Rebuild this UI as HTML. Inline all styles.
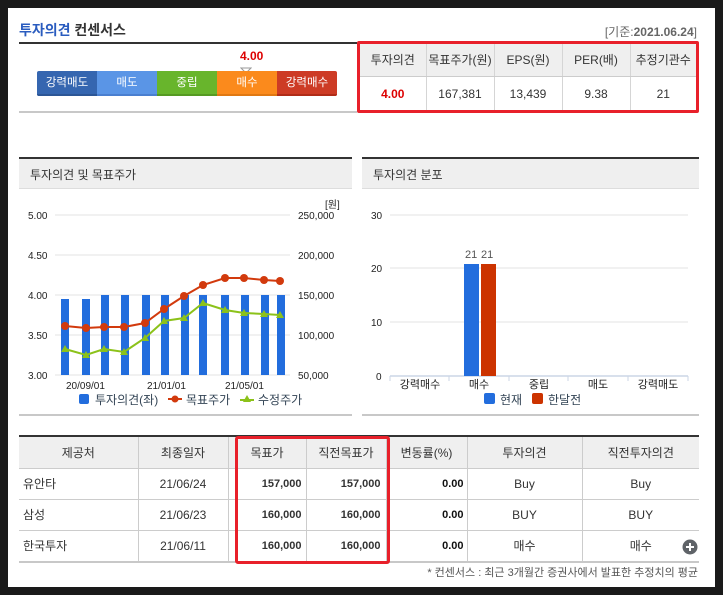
<!DOCTYPE html>
<html><head><meta charset="utf-8"><style>
*{margin:0;padding:0;box-sizing:border-box}
body{width:723px;height:595px;background:#1a1a1a;position:relative;overflow:hidden;font-family:"Liberation Sans","Noto Sans CJK KR",sans-serif;font-size:12px;color:#333}
.abs{position:absolute}
#pg{position:absolute;left:8px;top:8px;width:707px;height:579px;background:#fff}
table{border-collapse:collapse;position:absolute}
td,th{font-weight:normal;text-align:center;font-size:12px;color:#333}
</style></head><body>
<div id="pg"></div>
<div class="abs" style="left:19px;top:20px;font-size:14px;font-weight:bold;color:#333"><span style="color:#2a5cbf">투자의견</span> 컨센서스</div>
<div class="abs" style="left:19px;top:42px;width:338px;height:2px;background:#333"></div>
<div class="abs" style="left:19px;top:111px;width:338px;height:2px;background:#c8c8c8"></div>
<div class="abs" style="left:240px;top:49px;font-size:12px;font-weight:bold;color:#d00">4.00</div>
<svg class="abs" style="left:240px;top:67px" width="12" height="8"><polygon points="1,1 11,1 6,6" fill="#fff" stroke="#999"/></svg>
<div class="abs" style="left:37px;top:71px;width:300px;height:25px;display:flex;color:#fff;font-size:11.5px;line-height:24px;text-align:center;border-radius:2px;overflow:hidden">
<div style="width:60px;background:#3566b0;border-bottom:2px solid #2c5696">강력매도</div>
<div style="width:60px;background:#5a95e6;border-bottom:2px solid #4a7fd0">매도</div>
<div style="width:60px;background:#68b52c;border-bottom:2px solid #559a22">중립</div>
<div style="width:60px;background:#fb8a1c;border-bottom:2px solid #e07812">매수</div>
<div style="width:60px;background:#cd3b25;border-bottom:2px solid #b02c18">강력매수</div>
</div>
<div class="abs" style="right:26px;top:23px;font-size:12px;color:#666">[기준:<b>2021.06.24</b>]</div>
<table style="left:360px;top:44px;width:336px">
<tr style="height:32px;background:#efefef"><td style="width:66px;border-right:1px solid #d5d5d5;border-bottom:1px solid #ccc">투자의견</td><td style="width:68px;border-right:1px solid #d5d5d5;border-bottom:1px solid #ccc">목표주가(원)</td><td style="width:68px;border-right:1px solid #d5d5d5;border-bottom:1px solid #ccc">EPS(원)</td><td style="width:68px;border-right:1px solid #d5d5d5;border-bottom:1px solid #ccc">PER(배)</td><td style="border-bottom:1px solid #ccc">추정기관수</td></tr>
<tr style="height:35px"><td style="border-right:1px solid #d5d5d5;color:#d00;font-weight:bold">4.00</td><td style="border-right:1px solid #d5d5d5">167,381</td><td style="border-right:1px solid #d5d5d5">13,439</td><td style="border-right:1px solid #d5d5d5">9.38</td><td>21</td></tr>
</table>
<div class="abs" style="left:357px;top:41px;width:342px;height:72px;border:3px solid #e8202a;border-radius:2px"></div>

<!-- chart 1 -->
<div class="abs" style="left:19px;top:157px;width:333px;height:2px;background:#333"></div>
<div class="abs" style="left:19px;top:159px;width:333px;height:30px;background:#efefef;border-bottom:1px solid #ddd;padding:7px 0 0 11px;font-size:12px">투자의견 및 목표주가</div>
<div class="abs" style="left:19px;top:414px;width:333px;height:2px;background:#c8c8c8"></div>
<svg class="abs" style="left:0;top:0" width="360" height="420" font-family="Liberation Sans,sans-serif" font-size="10" fill="#222">
<g stroke="#e3e3e3"><line x1="55" y1="215" x2="290" y2="215"/><line x1="55" y1="255" x2="290" y2="255"/><line x1="55" y1="295" x2="290" y2="295"/><line x1="55" y1="335" x2="290" y2="335"/><line x1="55" y1="375" x2="290" y2="375"/></g>
<text x="28" y="219">5.00</text><text x="28" y="259">4.50</text><text x="28" y="299">4.00</text><text x="28" y="339">3.50</text><text x="28" y="379">3.00</text>
<text x="298" y="219">250,000</text><text x="298" y="259">200,000</text><text x="298" y="299">150,000</text><text x="298" y="339">100,000</text><text x="298" y="379">50,000</text>
<text x="325" y="208" font-family="Liberation Sans,Noto Sans CJK KR,sans-serif">[원]</text>
<g fill="#226ddd">
<rect x="61" y="299" width="8" height="76"/><rect x="82" y="299" width="8" height="76"/><rect x="101" y="295" width="8" height="80"/><rect x="121" y="295" width="8" height="80"/><rect x="142" y="295" width="8" height="80"/><rect x="161" y="295" width="8" height="80"/><rect x="181" y="295" width="8" height="80"/><rect x="199" y="295" width="8" height="80"/><rect x="221" y="295" width="8" height="80"/><rect x="241" y="295" width="8" height="80"/><rect x="261" y="295" width="8" height="80"/><rect x="277" y="295" width="8" height="80"/></g>
<polyline fill="none" stroke="#d23a0d" stroke-width="2" points="65,326 86,328 104,327 124,327 145,323 164,309 184,296 203,285 225,278 244,278 264,280 280,281"/>
<g fill="#d23a0d"><circle cx="65" cy="326" r="4"/><circle cx="86" cy="328" r="4"/><circle cx="104" cy="327" r="4"/><circle cx="124" cy="327" r="4"/><circle cx="145" cy="323" r="4"/><circle cx="164" cy="309" r="4"/><circle cx="184" cy="296" r="4"/><circle cx="203" cy="285" r="4"/><circle cx="225" cy="278" r="4"/><circle cx="244" cy="278" r="4"/><circle cx="264" cy="280" r="4"/><circle cx="280" cy="281" r="4"/></g>
<polyline fill="none" stroke="#8cc21a" stroke-width="2" points="65,349 86,355 104,349 124,352 145,338 164,321 184,318 203,303 225,310 244,313 264,314 280,315"/>
<g fill="#8cc21a"><path d="M65,345l4,7h-8z"/><path d="M86,351l4,7h-8z"/><path d="M104,345l4,7h-8z"/><path d="M124,348l4,7h-8z"/><path d="M145,334l4,7h-8z"/><path d="M164,317l4,7h-8z"/><path d="M184,314l4,7h-8z"/><path d="M203,299l4,7h-8z"/><path d="M225,306l4,7h-8z"/><path d="M244,309l4,7h-8z"/><path d="M264,310l4,7h-8z"/><path d="M280,311l4,7h-8z"/></g>
<text x="66" y="389">20/09/01</text><text x="147" y="389">21/01/01</text><text x="225" y="389">21/05/01</text>
<rect x="79" y="394" width="10" height="10" rx="2" fill="#226ddd"/>
<g font-family="Liberation Sans,Noto Sans CJK KR,sans-serif" font-size="12" fill="#345"><text x="95" y="404">투자의견(좌)</text><text x="186" y="404">목표주가</text><text x="258" y="404">수정주가</text></g>
<line x1="168" y1="399" x2="182" y2="399" stroke="#d23a0d" stroke-width="2"/><circle cx="175" cy="399" r="3.5" fill="#d23a0d"/>
<line x1="240" y1="400" x2="254" y2="400" stroke="#8cc21a" stroke-width="2"/><path d="M247,395l4,7h-8z" fill="#8cc21a"/>
</svg>

<!-- chart 2 -->
<div class="abs" style="left:362px;top:157px;width:337px;height:2px;background:#333"></div>
<div class="abs" style="left:362px;top:159px;width:337px;height:30px;background:#efefef;border-bottom:1px solid #ddd;padding:7px 0 0 11px;font-size:12px">투자의견 분포</div>
<div class="abs" style="left:362px;top:414px;width:337px;height:2px;background:#c8c8c8"></div>
<svg class="abs" style="left:360px;top:150px" width="350" height="270" font-family="Liberation Sans,Noto Sans CJK KR,sans-serif" font-size="10" fill="#222">
<g stroke="#e3e3e3"><line x1="30" y1="65" x2="328" y2="65"/><line x1="30" y1="118" x2="328" y2="118"/><line x1="30" y1="172" x2="328" y2="172"/></g>
<line x1="30" y1="226" x2="328" y2="226" stroke="#cbd6e6" stroke-width="1.5"/>
<g stroke="#cbd6e6"><line x1="30" y1="226" x2="30" y2="231"/><line x1="89" y1="226" x2="89" y2="231"/><line x1="149" y1="226" x2="149" y2="231"/><line x1="208" y1="226" x2="208" y2="231"/><line x1="268" y1="226" x2="268" y2="231"/><line x1="328" y1="226" x2="328" y2="231"/></g>
<text x="11" y="69">30</text><text x="11" y="122">20</text><text x="11" y="176">10</text><text x="16" y="230">0</text>
<rect x="104" y="114" width="15" height="112" fill="#226ddd"/><rect x="121" y="114" width="15" height="112" fill="#cc3300"/>
<text x="105" y="108" fill="#555" font-size="11">21</text><text x="121" y="108" fill="#555" font-size="11">21</text>
<g font-size="11" text-anchor="middle"><text x="60" y="238">강력매수</text><text x="119" y="238">매수</text><text x="179" y="238">중립</text><text x="238" y="238">매도</text><text x="298" y="238">강력매도</text></g>
<rect x="124" y="243" width="11" height="11" rx="2" fill="#226ddd"/><rect x="172" y="243" width="11" height="11" rx="2" fill="#cc3300"/>
<g font-size="12" fill="#345"><text x="140" y="254">현재</text><text x="188" y="254">한달전</text></g>
</svg>

<!-- bottom table -->
<div class="abs" style="left:19px;top:435px;width:680px;height:2px;background:#333"></div>
<table style="left:19px;top:437px;width:680px">
<tr style="height:31px;background:#efefef"><td style="width:119px;border-right:1px solid #ccc">제공처</td><td style="width:90px;border-right:1px solid #ccc">최종일자</td><td style="width:78px;border-right:1px solid #ccc">목표가</td><td style="width:80px;border-right:1px solid #ccc">직전목표가</td><td style="width:81px;border-right:1px solid #ccc">변동률(%)</td><td style="width:115px;border-right:1px solid #ccc">투자의견</td><td>직전투자의견</td></tr>
<tr style="height:31px;border-top:1px solid #ccc"><td style="text-align:left;padding-left:4px;border-right:1px solid #ccc">유안타</td><td style="border-right:1px solid #ccc">21/06/24</td><td style="text-align:right;padding-right:4px;border-right:1px solid #ccc;font-size:11px;font-weight:bold">157,000</td><td style="text-align:right;padding-right:5px;border-right:1px solid #ccc;font-size:11px;font-weight:bold">157,000</td><td style="text-align:right;padding-right:3px;border-right:1px solid #ccc;font-size:11px;font-weight:bold;color:#111">0.00</td><td style="border-right:1px solid #ccc">Buy</td><td>Buy</td></tr>
<tr style="height:31px;border-top:1px solid #ccc"><td style="text-align:left;padding-left:4px;border-right:1px solid #ccc">삼성</td><td style="border-right:1px solid #ccc">21/06/23</td><td style="text-align:right;padding-right:4px;border-right:1px solid #ccc;font-size:11px;font-weight:bold">160,000</td><td style="text-align:right;padding-right:5px;border-right:1px solid #ccc;font-size:11px;font-weight:bold">160,000</td><td style="text-align:right;padding-right:3px;border-right:1px solid #ccc;font-size:11px;font-weight:bold;color:#111">0.00</td><td style="border-right:1px solid #ccc">BUY</td><td>BUY</td></tr>
<tr style="height:31px;border-top:1px solid #ccc"><td style="text-align:left;padding-left:4px;border-right:1px solid #ccc">한국투자</td><td style="border-right:1px solid #ccc">21/06/11</td><td style="text-align:right;padding-right:4px;border-right:1px solid #ccc;font-size:11px;font-weight:bold">160,000</td><td style="text-align:right;padding-right:5px;border-right:1px solid #ccc;font-size:11px;font-weight:bold">160,000</td><td style="text-align:right;padding-right:3px;border-right:1px solid #ccc;font-size:11px;font-weight:bold;color:#111">0.00</td><td style="border-right:1px solid #ccc">매수</td><td>매수</td></tr>
</table>
<div class="abs" style="left:19px;top:561px;width:680px;height:2px;background:#c8c8c8"></div>
<div class="abs" style="left:235px;top:436px;width:155px;height:128px;border:3px solid #e8202a;border-radius:3px"></div>
<svg class="abs" style="left:682px;top:539px" width="16" height="16"><circle cx="8" cy="8" r="7.5" fill="#5f6368"/><path d="M8,4v8M4,8h8" stroke="#fff" stroke-width="2"/></svg>
<div class="abs" style="right:25px;top:564px;font-size:11px;color:#555">* 컨센서스 : 최근 3개월간 증권사에서 발표한 추정치의 평균</div>
</body></html>
